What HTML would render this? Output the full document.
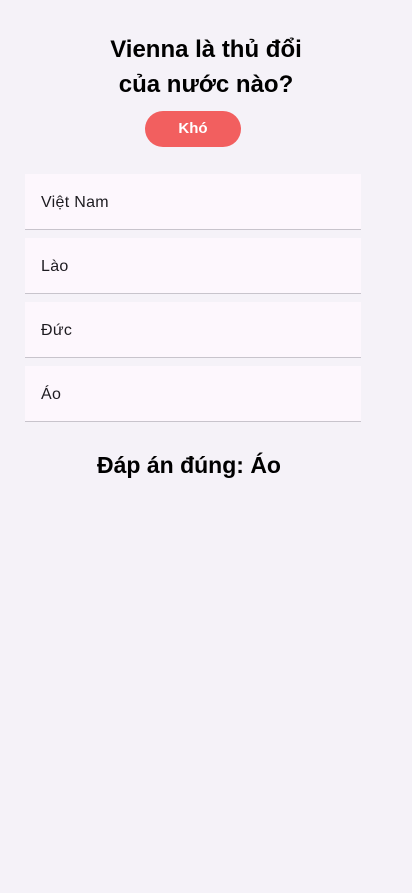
<!DOCTYPE html>
<html><head><meta charset="utf-8"><style>
body{margin:0;width:412px;height:893px;background:#f5f2f8;font-family:"Liberation Sans",sans-serif;position:relative;overflow:hidden}
.t{position:absolute;left:0;width:412px;text-align:center;font-weight:bold;font-size:24px;color:#000;line-height:35px}
.btn{position:absolute;left:145px;top:111px;width:96px;height:36px;border-radius:18px;background:#f25f5f;color:#fff;font-weight:bold;font-size:15px;text-align:center;line-height:36px}
.c{position:absolute;left:25px;width:336px;height:55px;background:#fdf7fd;border-bottom:1px solid #c8c4cc;box-sizing:content-box}
.c span{position:absolute;left:16px;top:20px;font-size:16px;color:#1d1b20;letter-spacing:.3px}
.a{position:absolute;left:0;width:378px;text-align:center;top:452px;font-size:23px;font-weight:bold;color:#000}
</style></head><body>
<div class="t" style="top:32px">Vienna là thủ đổi<br>của nước nào?</div>
<div class="btn">Khó</div>
<div class="c" style="top:174px"><span>Việt Nam</span></div>
<div class="c" style="top:238px"><span>Lào</span></div>
<div class="c" style="top:302px"><span>Đức</span></div>
<div class="c" style="top:366px"><span>Áo</span></div>
<div class="a">Đáp án đúng: Áo</div>
</body></html>
